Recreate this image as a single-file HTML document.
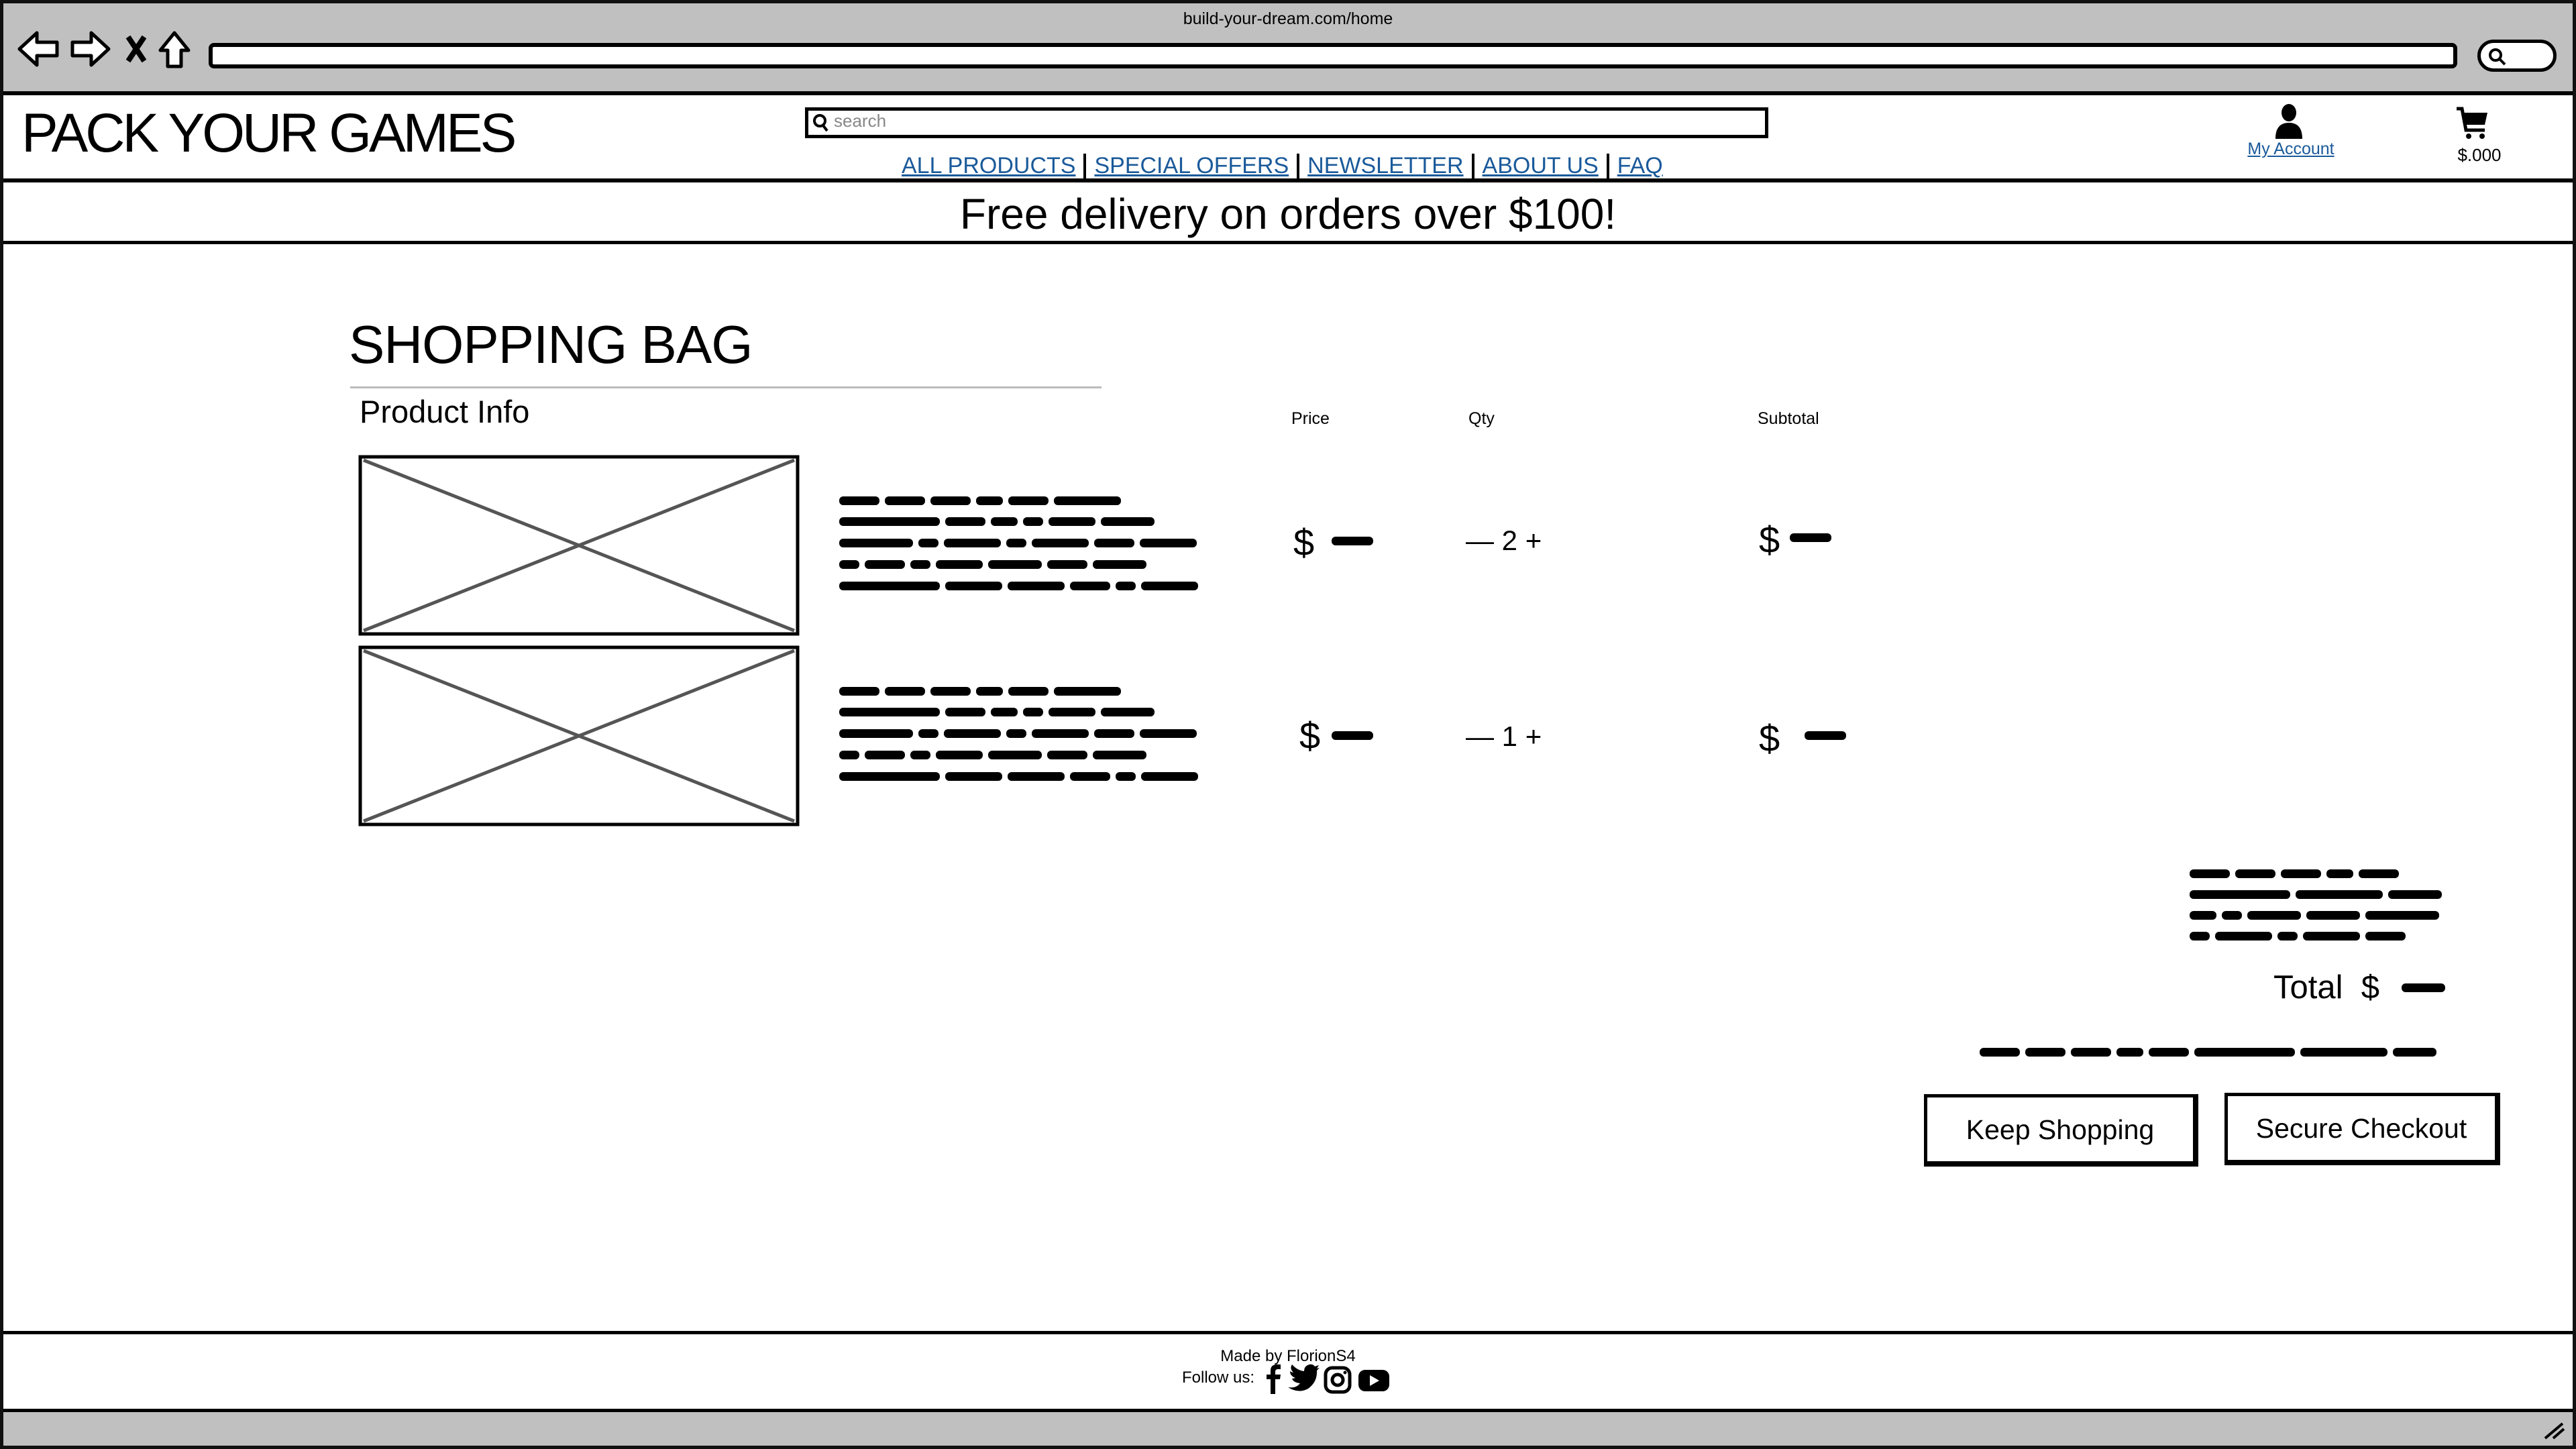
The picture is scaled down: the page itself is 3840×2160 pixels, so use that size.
<!DOCTYPE html>
<html><head><meta charset="utf-8"><style>
*{margin:0;padding:0;box-sizing:border-box}
body{width:3840px;height:2160px;position:relative;background:#fff;font-family:"Liberation Sans",sans-serif;overflow:hidden;color:#000}
.a{position:absolute}
.sc{position:absolute;height:13px;display:flex;gap:8px}
.sc i{display:block;height:13px;background:#000;border-radius:6px}
a{color:#1a5a9a}
.sep{display:inline-block;width:4px;height:40px;background:#000;vertical-align:middle;margin:0 12px}
</style></head><body>
<div class="a" style="left:0;top:0;width:3840px;height:2160px;border:5px solid #111"></div>
<div class="a" style="left:5px;top:5px;width:3830px;height:137px;background:#c0c0c0;border-bottom:6px solid #000"></div>
<div class="a" style="left:0;top:14px;width:3840px;text-align:center;font-size:25px">build-your-dream.com/home</div>
<svg class="a" style="left:25px;top:45px" width="270" height="60" viewBox="0 0 270 60" fill="#fff" stroke="#000" stroke-width="5" stroke-linejoin="round">
<path d="M4 28 L30 4 L30 18 L60 18 L60 38 L30 38 L30 52 Z"/>
<path d="M137 28 L111 4 L111 18 L83 18 L83 38 L111 38 L111 52 Z"/>
<path d="M166 10 L190 46 M190 10 L166 46" stroke-width="8"/>
<path d="M235 4 L214 30 L225 30 L225 54 L245 54 L245 30 L256 30 Z"/>
</svg>
<div class="a" style="left:311px;top:64px;width:3352px;height:38px;background:#fff;border:6px solid #000;border-radius:8px"></div>
<div class="a" style="left:3693px;top:59px;width:118px;height:48px;background:#fff;border:5px solid #000;border-radius:24px"></div>
<svg class="a" style="left:3708px;top:70px" width="30" height="30" viewBox="0 0 30 30"><circle cx="12" cy="12" r="8" fill="none" stroke="#000" stroke-width="4"/><path d="M18 18 L26 26" stroke="#000" stroke-width="4"/></svg>
<div class="a" style="left:32px;top:152px;font-size:82px;letter-spacing:-4px">PACK YOUR GAMES</div>
<div class="a" style="left:1200px;top:160px;width:1436px;height:46px;border:5px solid #000"></div>
<svg class="a" style="left:1210px;top:168px" width="28" height="30" viewBox="0 0 28 30"><circle cx="12" cy="12" r="8" fill="none" stroke="#000" stroke-width="4"/><path d="M17 19 L23 27" stroke="#000" stroke-width="4"/></svg>
<div class="a" style="left:1243px;top:165px;font-size:26px;color:#888">search</div>
<div class="a" style="left:1344px;top:228px;font-size:34px;white-space:nowrap">
<a style="text-decoration:underline">ALL PRODUCTS</a><span class="sep"></span><a style="text-decoration:underline">SPECIAL OFFERS</a><span class="sep"></span><a style="text-decoration:underline">NEWSLETTER</a><span class="sep"></span><a style="text-decoration:underline">ABOUT US</a><span class="sep"></span><a style="text-decoration:underline">FAQ</a></div>
<svg class="a" style="left:3390px;top:155px" width="44" height="52" viewBox="0 0 44 52"><ellipse cx="22" cy="13" rx="11" ry="13"/><path d="M2 52 Q2 28 22 28 Q42 28 42 52 Z"/></svg>
<div class="a" style="left:3340px;top:208px;width:150px;text-align:center;font-size:25px"><a style="text-decoration:underline">My Account</a></div>
<svg class="a" style="left:3660px;top:158px" width="50" height="50" viewBox="0 0 50 50"><path d="M2 4 L10 4 L16 36 L44 36" fill="none" stroke="#000" stroke-width="5"/><path d="M12 10 L48 10 L44 28 L16 28 Z"/><circle cx="20" cy="45" r="4"/><circle cx="40" cy="45" r="4"/></svg>
<div class="a" style="left:3626px;top:216px;width:140px;text-align:center;font-size:26px">$.000</div>
<div class="a" style="left:5px;top:266px;width:3830px;height:6px;background:#000"></div>
<div class="a" style="left:0;top:282px;width:3840px;text-align:center;font-size:64px">Free delivery on orders over $100!</div>
<div class="a" style="left:5px;top:359px;width:3830px;height:5px;background:#000"></div>
<div class="a" style="left:520px;top:468px;font-size:80px;letter-spacing:-1px">SHOPPING BAG</div>
<div class="a" style="left:522px;top:576px;width:1120px;height:3px;background:#bbb"></div>
<div class="a" style="left:536px;top:586px;font-size:47px">Product Info</div>
<div class="a" style="left:1925px;top:610px;font-size:25px">Price</div>
<div class="a" style="left:2189px;top:610px;font-size:25px">Qty</div>
<div class="a" style="left:2620px;top:610px;font-size:25px">Subtotal</div>
<svg class="a" style="left:534px;top:678px" width="660" height="272" viewBox="0 0 660 272"><rect x="3" y="3" width="652" height="264" fill="#fff" stroke="#000" stroke-width="5"/><path d="M8 8 L650 262 M650 8 L8 262" stroke="#555" stroke-width="5"/></svg>
<svg class="a" style="left:534px;top:962px" width="660" height="272" viewBox="0 0 660 272"><rect x="3" y="3" width="652" height="264" fill="#fff" stroke="#000" stroke-width="5"/><path d="M8 8 L650 262 M650 8 L8 262" stroke="#555" stroke-width="5"/></svg>
<div class="sc" style="left:1251px;top:740px"><i style="width:60px"></i><i style="width:60px"></i><i style="width:60px"></i><i style="width:40px"></i><i style="width:60px"></i><i style="width:100px"></i></div>
<div class="sc" style="left:1251px;top:771px"><i style="width:150px"></i><i style="width:60px"></i><i style="width:40px"></i><i style="width:30px"></i><i style="width:70px"></i><i style="width:80px"></i></div>
<div class="sc" style="left:1251px;top:803px"><i style="width:110px"></i><i style="width:30px"></i><i style="width:85px"></i><i style="width:30px"></i><i style="width:85px"></i><i style="width:60px"></i><i style="width:85px"></i></div>
<div class="sc" style="left:1251px;top:835px"><i style="width:30px"></i><i style="width:60px"></i><i style="width:30px"></i><i style="width:70px"></i><i style="width:80px"></i><i style="width:60px"></i><i style="width:80px"></i></div>
<div class="sc" style="left:1251px;top:867px"><i style="width:150px"></i><i style="width:85px"></i><i style="width:85px"></i><i style="width:60px"></i><i style="width:30px"></i><i style="width:85px"></i></div>
<div class="sc" style="left:1251px;top:1024px"><i style="width:60px"></i><i style="width:60px"></i><i style="width:60px"></i><i style="width:40px"></i><i style="width:60px"></i><i style="width:100px"></i></div>
<div class="sc" style="left:1251px;top:1055px"><i style="width:150px"></i><i style="width:60px"></i><i style="width:40px"></i><i style="width:30px"></i><i style="width:70px"></i><i style="width:80px"></i></div>
<div class="sc" style="left:1251px;top:1087px"><i style="width:110px"></i><i style="width:30px"></i><i style="width:85px"></i><i style="width:30px"></i><i style="width:85px"></i><i style="width:60px"></i><i style="width:85px"></i></div>
<div class="sc" style="left:1251px;top:1119px"><i style="width:30px"></i><i style="width:60px"></i><i style="width:30px"></i><i style="width:70px"></i><i style="width:80px"></i><i style="width:60px"></i><i style="width:80px"></i></div>
<div class="sc" style="left:1251px;top:1151px"><i style="width:150px"></i><i style="width:85px"></i><i style="width:85px"></i><i style="width:60px"></i><i style="width:30px"></i><i style="width:85px"></i></div>
<div class="a" style="left:1928px;top:776px;font-size:56px">$</div>
<div class="sc" style="left:1985px;top:800px"><i style="width:62px"></i></div>
<div class="a" style="left:2185px;top:782px;font-size:42px">— 2 +</div>
<div class="a" style="left:2622px;top:772px;font-size:56px">$</div>
<div class="sc" style="left:2668px;top:795px"><i style="width:62px"></i></div>
<div class="a" style="left:1937px;top:1064px;font-size:56px">$</div>
<div class="sc" style="left:1985px;top:1090px"><i style="width:62px"></i></div>
<div class="a" style="left:2185px;top:1074px;font-size:42px">— 1 +</div>
<div class="a" style="left:2622px;top:1068px;font-size:56px">$</div>
<div class="sc" style="left:2690px;top:1090px"><i style="width:62px"></i></div>
<div class="sc" style="left:3264px;top:1296px"><i style="width:60px"></i><i style="width:60px"></i><i style="width:60px"></i><i style="width:40px"></i><i style="width:60px"></i></div>
<div class="sc" style="left:3264px;top:1327px"><i style="width:150px"></i><i style="width:130px"></i><i style="width:80px"></i></div>
<div class="sc" style="left:3264px;top:1358px"><i style="width:40px"></i><i style="width:30px"></i><i style="width:80px"></i><i style="width:80px"></i><i style="width:110px"></i></div>
<div class="sc" style="left:3264px;top:1389px"><i style="width:30px"></i><i style="width:85px"></i><i style="width:30px"></i><i style="width:85px"></i><i style="width:60px"></i></div>
<div class="a" style="left:3389px;top:1444px;font-size:49px">Total &nbsp;$</div>
<div class="sc" style="left:3580px;top:1466px"><i style="width:65px"></i></div>
<div class="sc" style="left:2951px;top:1562px"><i style="width:60px"></i><i style="width:60px"></i><i style="width:60px"></i><i style="width:40px"></i><i style="width:60px"></i><i style="width:150px"></i><i style="width:130px"></i><i style="width:65px"></i></div>
<div class="a" style="left:2868px;top:1631px;width:409px;height:108px;border:5px solid #000;border-right-width:8px;border-bottom-width:8px;font-size:41px;text-align:center;line-height:96px">Keep Shopping</div>
<div class="a" style="left:3316px;top:1629px;width:411px;height:108px;border:5px solid #000;border-right-width:8px;border-bottom-width:8px;font-size:41px;text-align:center;line-height:96px">Secure Checkout</div>
<div class="a" style="left:5px;top:1984px;width:3830px;height:5px;background:#000"></div>
<div class="a" style="left:0;top:2008px;width:3840px;text-align:center;font-size:24px">Made by FlorionS4</div>
<div class="a" style="left:1762px;top:2040px;font-size:24px">Follow us:</div>
<svg class="a" style="left:1880px;top:2030px" width="195" height="50" viewBox="0 0 195 50">
<path d="M14 48 L14 26 L8 26 L8 19 L14 19 L14 13 Q14 4 24 4 L29 4 L29 11 L25 11 Q21 11 21 15 L21 19 L29 19 L28 26 L21 26 L21 48 Z"/>
<path d="M40 38 Q52 40 58 32 Q48 31 46 25 Q49 25 51 24 Q43 21 43 14 Q46 16 48 16 Q42 10 46 4 Q54 13 64 14 Q64 6 72 4 Q77 3 80 7 L86 5 L83 10 L87 9 L83 13 Q84 30 70 40 Q56 48 40 38 Z"/>
<rect x="96" y="9" width="36" height="36" rx="10" fill="none" stroke="#000" stroke-width="5"/><circle cx="114" cy="27" r="8" fill="none" stroke="#000" stroke-width="5"/><circle cx="125" cy="16" r="2.5"/>
<rect x="145" y="12" width="46" height="32" rx="10"/><path d="M162 20 L162 36 L176 28 Z" fill="#fff"/>
</svg>
<div class="a" style="left:5px;top:2100px;width:3830px;height:55px;background:#c0c0c0;border-top:5px solid #000"></div>
<svg class="a" style="left:3790px;top:2118px" width="36" height="30"><path d="M4 26 L30 4 M16 26 L32 12" stroke="#000" stroke-width="4"/></svg>
</body></html>
